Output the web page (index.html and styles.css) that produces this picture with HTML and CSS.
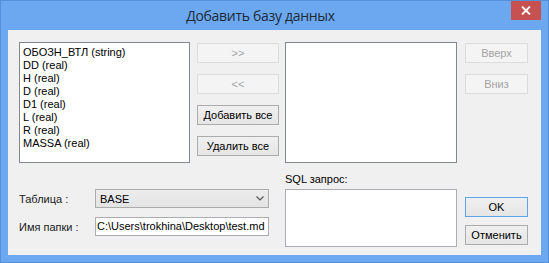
FILE: index.html
```html
<!DOCTYPE html>
<html lang="ru">
<head>
    <meta charset="UTF-8">
    <title>Добавить базу данных</title>
    <link rel="stylesheet" href="styles.css">
</head>
<body>

    <div class="window">
        <div class="titlebar">
            <div class="title">Добавить базу данных</div>
            <div class="close">
                <svg width="10" height="9" viewBox="0 0 10 9"><path d="M1 0.5 L9 8.5 M9 0.5 L1 8.5" stroke="#fff" stroke-width="1.8"/></svg>
            </div>
        </div>

        <div class="client">
            <div class="top-row">
                <ul class="list">
                    <li>ОБОЗН_ВТЛ (string)</li>
                    <li>DD (real)</li>
                    <li>H (real)</li>
                    <li>D (real)</li>
                    <li>D1 (real)</li>
                    <li>L (real)</li>
                    <li>R (real)</li>
                    <li>MASSA (real)</li>
                </ul>
                <div class="mid-col">
                    <button class="btn" disabled>&gt;&gt;</button>
                    <button class="btn" disabled>&lt;&lt;</button>
                    <button class="btn">Добавить все</button>
                    <button class="btn">Удалить все</button>
                </div>
                <ul class="list list-right"></ul>
                <div class="side-col">
                    <button class="btn" disabled>Вверх</button>
                    <button class="btn" disabled>Вниз</button>
                </div>
            </div>

            <div class="bottom-row">
                <div class="fields">
                    <div class="field">
                        <span class="label">Таблица :</span>
                        <div class="combo">
                            <span>BASE</span>
                            <svg width="8" height="5" viewBox="0 0 8 5"><path d="M0.5 0.5 L4 4 L7.5 0.5" fill="none" stroke="#555" stroke-width="1.2"/></svg>
                        </div>
                    </div>
                    <div class="field">
                        <span class="label">Имя папки :</span>
                        <div class="textbox">C:\Users\trokhina\Desktop\test.md</div>
                    </div>
                </div>
                <div class="sql">
                    <div class="sql-label">SQL запрос:</div>
                    <div class="sql-box"></div>
                </div>
                <div class="actions">
                    <button class="btn btn-default">OK</button>
                    <button class="btn">Отменить</button>
                </div>
            </div>
        </div>
    </div>

</body>
</html>
```

FILE: styles.css
```css
body {
    margin: 0;
    font-family: "Liberation Sans", Arial, sans-serif;
    font-size: 11px;
    color: #000;
}
.window {
    width: 549px;
    height: 263px;
    box-sizing: border-box;
    background: #6ba8ef;
    border: 1px solid #5590db;
}
.titlebar {
    height: 29px;
    display: flex;
    position: relative;
}
.title {
    flex: 1;
    text-align: center;
    padding-right: 28px;
    font-family: "Open Sans", "Noto Sans", sans-serif;
    font-size: 14px;
    letter-spacing: -0.3px;
    line-height: 30px;
    color: #1f2a38;
}
.close {
    position: absolute;
    top: 0;
    right: 7px;
    width: 30px;
    height: 19px;
    background: #c75050;
    display: flex;
    align-items: center;
    justify-content: center;
}
.client {
    margin: 0 7px;
    height: 225px;
    background: #f0f0f0;
    padding: 12px 0 0 11px;
    box-sizing: border-box;
}
.top-row {
    display: flex;
    align-items: flex-start;
    height: 121px;
}
.list {
    list-style: none;
    margin: 0;
    width: 171px;
    height: 121px;
    box-sizing: border-box;
    padding: 3px 3px;
    background: #fff;
    border: 1px solid #828790;
}
.list li {
    line-height: 13px;
    white-space: nowrap;
}
.list-right {
    margin-left: 6px;
    width: 172px;
}
.mid-col, .side-col {
    display: flex;
    flex-direction: column;
    gap: 11px;
    margin-top: 1px;
}
.mid-col {
    margin-left: 7px;
    width: 82px;
}
.side-col {
    margin-left: 8px;
    width: 63px;
}
.btn {
    height: 20px;
    width: 100%;
    padding: 0;
    font-family: inherit;
    font-size: 11px;
    color: #000;
    border: 1px solid #acacac;
    background: linear-gradient(#f0f0f0, #e5e5e5);
}
.btn:disabled {
    color: #a3a3a3;
    border-color: #dcdcdc;
    background: #f4f4f4;
}
.btn-default {
    border-color: #5aa6e8;
}
.bottom-row {
    display: flex;
    align-items: flex-start;
    margin-top: 10px;
}
.fields {
    width: 250px;
    padding-top: 16px;
    display: flex;
    flex-direction: column;
    gap: 9px;
}
.field {
    display: flex;
    align-items: center;
    height: 19px;
}
.label {
    width: 76px;
    color: #1a1a1a;
}
.combo {
    flex: 1;
    height: 19px;
    box-sizing: border-box;
    border: 1px solid #acacac;
    background: linear-gradient(#ececec, #e4e4e4);
    display: flex;
    align-items: center;
    justify-content: space-between;
    padding: 0 4px 0 4px;
}
.textbox {
    flex: 1;
    height: 19px;
    box-sizing: border-box;
    border: 1px solid #abadb3;
    background: #fff;
    padding: 0 1px;
    line-height: 17px;
    white-space: nowrap;
    overflow: hidden;
}
.sql {
    margin-left: 16px;
    width: 172px;
}
.sql-label {
    line-height: 13px;
    margin-bottom: 3px;
}
.sql-box {
    height: 58px;
    box-sizing: border-box;
    border: 1px solid #abadb3;
    background: #fff;
}
.actions {
    margin-left: 8px;
    width: 63px;
    padding-top: 24px;
    display: flex;
    flex-direction: column;
    gap: 8px;
}
```
